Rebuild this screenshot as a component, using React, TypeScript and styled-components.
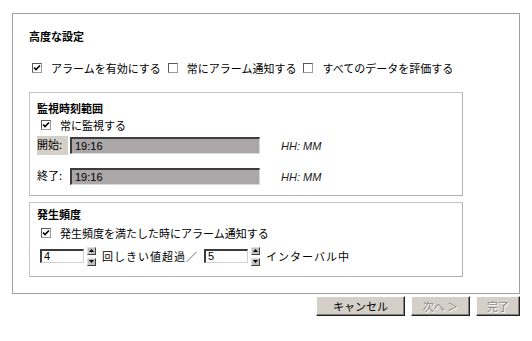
import styled, { createGlobalStyle } from "styled-components"

const GlobalStyle = createGlobalStyle`
    body {
        margin: 0;
        background: #fff;
        font-family: "Noto Sans CJK JP", "Liberation Sans", sans-serif;
        font-size: 11px;
        color: #000;
    }
`

const Page = styled.div`
    padding: 13px 0 0 12px;
    width: 508px;
`

const Panel = styled.div`
    box-sizing: border-box;
    width: 508px;
    border: 1px solid #a0a0a0;
    padding: 15px 0 16px 16px;
`

const Heading = styled.div`
    font-weight: bold;
    line-height: 14px;
`

const OptionRow = styled.div<{ $top: number; $indent: number }>`
    display: flex;
    align-items: center;
    height: 14px;
    margin-top: ${(p) => p.$top}px;
    padding-left: ${(p) => p.$indent}px;
    white-space: nowrap;
`

const Option = styled.label`
    display: flex;
    align-items: center;
    margin-right: 7px;
`

const Box = styled.span`
    box-sizing: border-box;
    width: 10px;
    height: 10px;
    border: 1px solid #5a5a5a;
    border-right-color: #9a9a9a;
    border-bottom-color: #9a9a9a;
    background: #fff;
    margin-right: 9px;
    display: flex;
    align-items: center;
    justify-content: center;
`

const Section = styled.div<{ $top: number; $padTop: number; $padBottom: number }>`
    box-sizing: border-box;
    width: 434px;
    margin-top: ${(p) => p.$top}px;
    border: 1px solid #c4c4c4;
    border-right-color: #b0b0b0;
    border-bottom-color: #b0b0b0;
    padding: ${(p) => p.$padTop}px 0 ${(p) => p.$padBottom}px 7px;
`

const SectionTitle = styled.div`
    font-weight: bold;
    line-height: 16px;
`

const TimeRow = styled.div<{ $top: number }>`
    display: flex;
    align-items: center;
    height: 19px;
    margin-top: ${(p) => p.$top}px;
`

const TimeLabel = styled.span<{ $active?: boolean }>`
    width: 31px;
    height: 19px;
    line-height: 17px;
    background: ${(p) => (p.$active ? "#d4d0c8" : "transparent")};
`

const TimeInput = styled.div`
    box-sizing: border-box;
    width: 190px;
    height: 17px;
    margin-left: 2px;
    background: #aba6a8;
    border-top: 2px solid #3c3c3c;
    border-left: 2px solid #3c3c3c;
    border-right: 1px solid #d8d8d8;
    border-bottom: 1px solid #d8d8d8;
    padding-left: 3px;
    font-family: "Liberation Sans", sans-serif;
    font-size: 11px;
    line-height: 14px;
`

const Hint = styled.span`
    margin-left: 21px;
    font-family: "Liberation Sans", sans-serif;
    font-style: italic;
    font-size: 11px;
    color: #222;
`

const NumberRow = styled.div`
    display: flex;
    align-items: center;
    height: 20px;
    margin-top: 6px;
    padding-left: 3px;
    white-space: nowrap;
`

const NumberInput = styled.div<{ $gap?: number }>`
    box-sizing: border-box;
    width: 44px;
    height: 14px;
    margin-left: ${(p) => p.$gap ?? 0}px;
    background: #fff;
    border-top: 2px solid #3c3c3c;
    border-left: 2px solid #3c3c3c;
    border-right: 1px solid #d0d0d0;
    border-bottom: 1px solid #d0d0d0;
    padding-left: 2px;
    font-family: "Liberation Sans", sans-serif;
    font-size: 11px;
    line-height: 11px;
`

const Spinner = styled.div`
    display: flex;
    flex-direction: column;
    justify-content: space-between;
    height: 19px;
    margin: 0 6px 0 3px;
`

const SpinButton = styled.span`
    box-sizing: border-box;
    width: 9px;
    height: 8px;
    background: #c0c0c0;
    border: 1px solid #404040;
    border-top-color: #e0e0e0;
    border-left-color: #e0e0e0;
    display: flex;
    align-items: center;
    justify-content: center;
`

const Spaced = styled.span`
    letter-spacing: 1px;
`

const Buttons = styled.div`
    display: flex;
    justify-content: flex-end;
    gap: 6px;
    margin-top: 2px;
`

const Button = styled.button<{ $width: number }>`
    box-sizing: border-box;
    width: ${(p) => p.$width}px;
    height: 20px;
    padding: 0;
    background: #d4d0c8;
    border: 1px solid;
    border-color: #ffffff #202020 #202020 #ffffff;
    box-shadow: inset -1px -1px #808080;
    font-family: "Noto Sans CJK JP", sans-serif;
    font-size: 11px;
    color: #000;
    &:disabled {
        color: #8a8a8a;
        text-shadow: 1px 1px #fff;
    }
`

function Check({ checked, children }: { checked?: boolean; children: string }) {
    return (
        <Option>
            <Box>
                {checked && (
                    <svg width="8" height="8" viewBox="0 0 8 8">
                        <path d="M1 3.5 L3 5.5 L7 1.5" stroke="#000" strokeWidth="1.6" fill="none" />
                    </svg>
                )}
            </Box>
            {children}
        </Option>
    )
}

function Spin() {
    return (
        <Spinner>
            <SpinButton>
                <svg width="5" height="3" viewBox="0 0 5 3"><path d="M0 3 L2.5 0 L5 3 Z" fill="#000" /></svg>
            </SpinButton>
            <SpinButton>
                <svg width="5" height="3" viewBox="0 0 5 3"><path d="M0 0 L2.5 3 L5 0 Z" fill="#000" /></svg>
            </SpinButton>
        </Spinner>
    )
}

export default function App() {
    return (
        <Page>
            <GlobalStyle />
            <Panel>
                <Heading>高度な設定</Heading>
                <OptionRow $top={18} $indent={3}>
                    <Check checked>アラームを有効にする</Check>
                    <Check>常にアラーム通知する</Check>
                    <Check>すべてのデータを評価する</Check>
                </OptionRow>

                <Section $top={17} $padTop={7} $padBottom={9}>
                    <SectionTitle>監視時刻範囲</SectionTitle>
                    <OptionRow $top={2} $indent={4}>
                        <Check checked>常に監視する</Check>
                    </OptionRow>
                    <TimeRow $top={4}>
                        <TimeLabel $active>開始:</TimeLabel>
                        <TimeInput>19:16</TimeInput>
                        <Hint>HH: MM</Hint>
                    </TimeRow>
                    <TimeRow $top={12}>
                        <TimeLabel>終了:</TimeLabel>
                        <TimeInput>19:16</TimeInput>
                        <Hint>HH: MM</Hint>
                    </TimeRow>
                </Section>

                <Section $top={6} $padTop={3} $padBottom={10}>
                    <SectionTitle>発生頻度</SectionTitle>
                    <OptionRow $top={4} $indent={4}>
                        <Check checked>発生頻度を満たした時にアラーム通知する</Check>
                    </OptionRow>
                    <NumberRow>
                        <NumberInput>4</NumberInput>
                        <Spin />
                        <Spaced>回しきい値超過／</Spaced>
                        <NumberInput $gap={6}>5</NumberInput>
                        <Spin />
                        <Spaced>インターバル中</Spaced>
                    </NumberRow>
                </Section>
            </Panel>
            <Buttons>
                <Button $width={89}>キャンセル</Button>
                <Button $width={59} disabled>次へ ＞</Button>
                <Button $width={44} disabled>完了</Button>
            </Buttons>
        </Page>
    )
}
